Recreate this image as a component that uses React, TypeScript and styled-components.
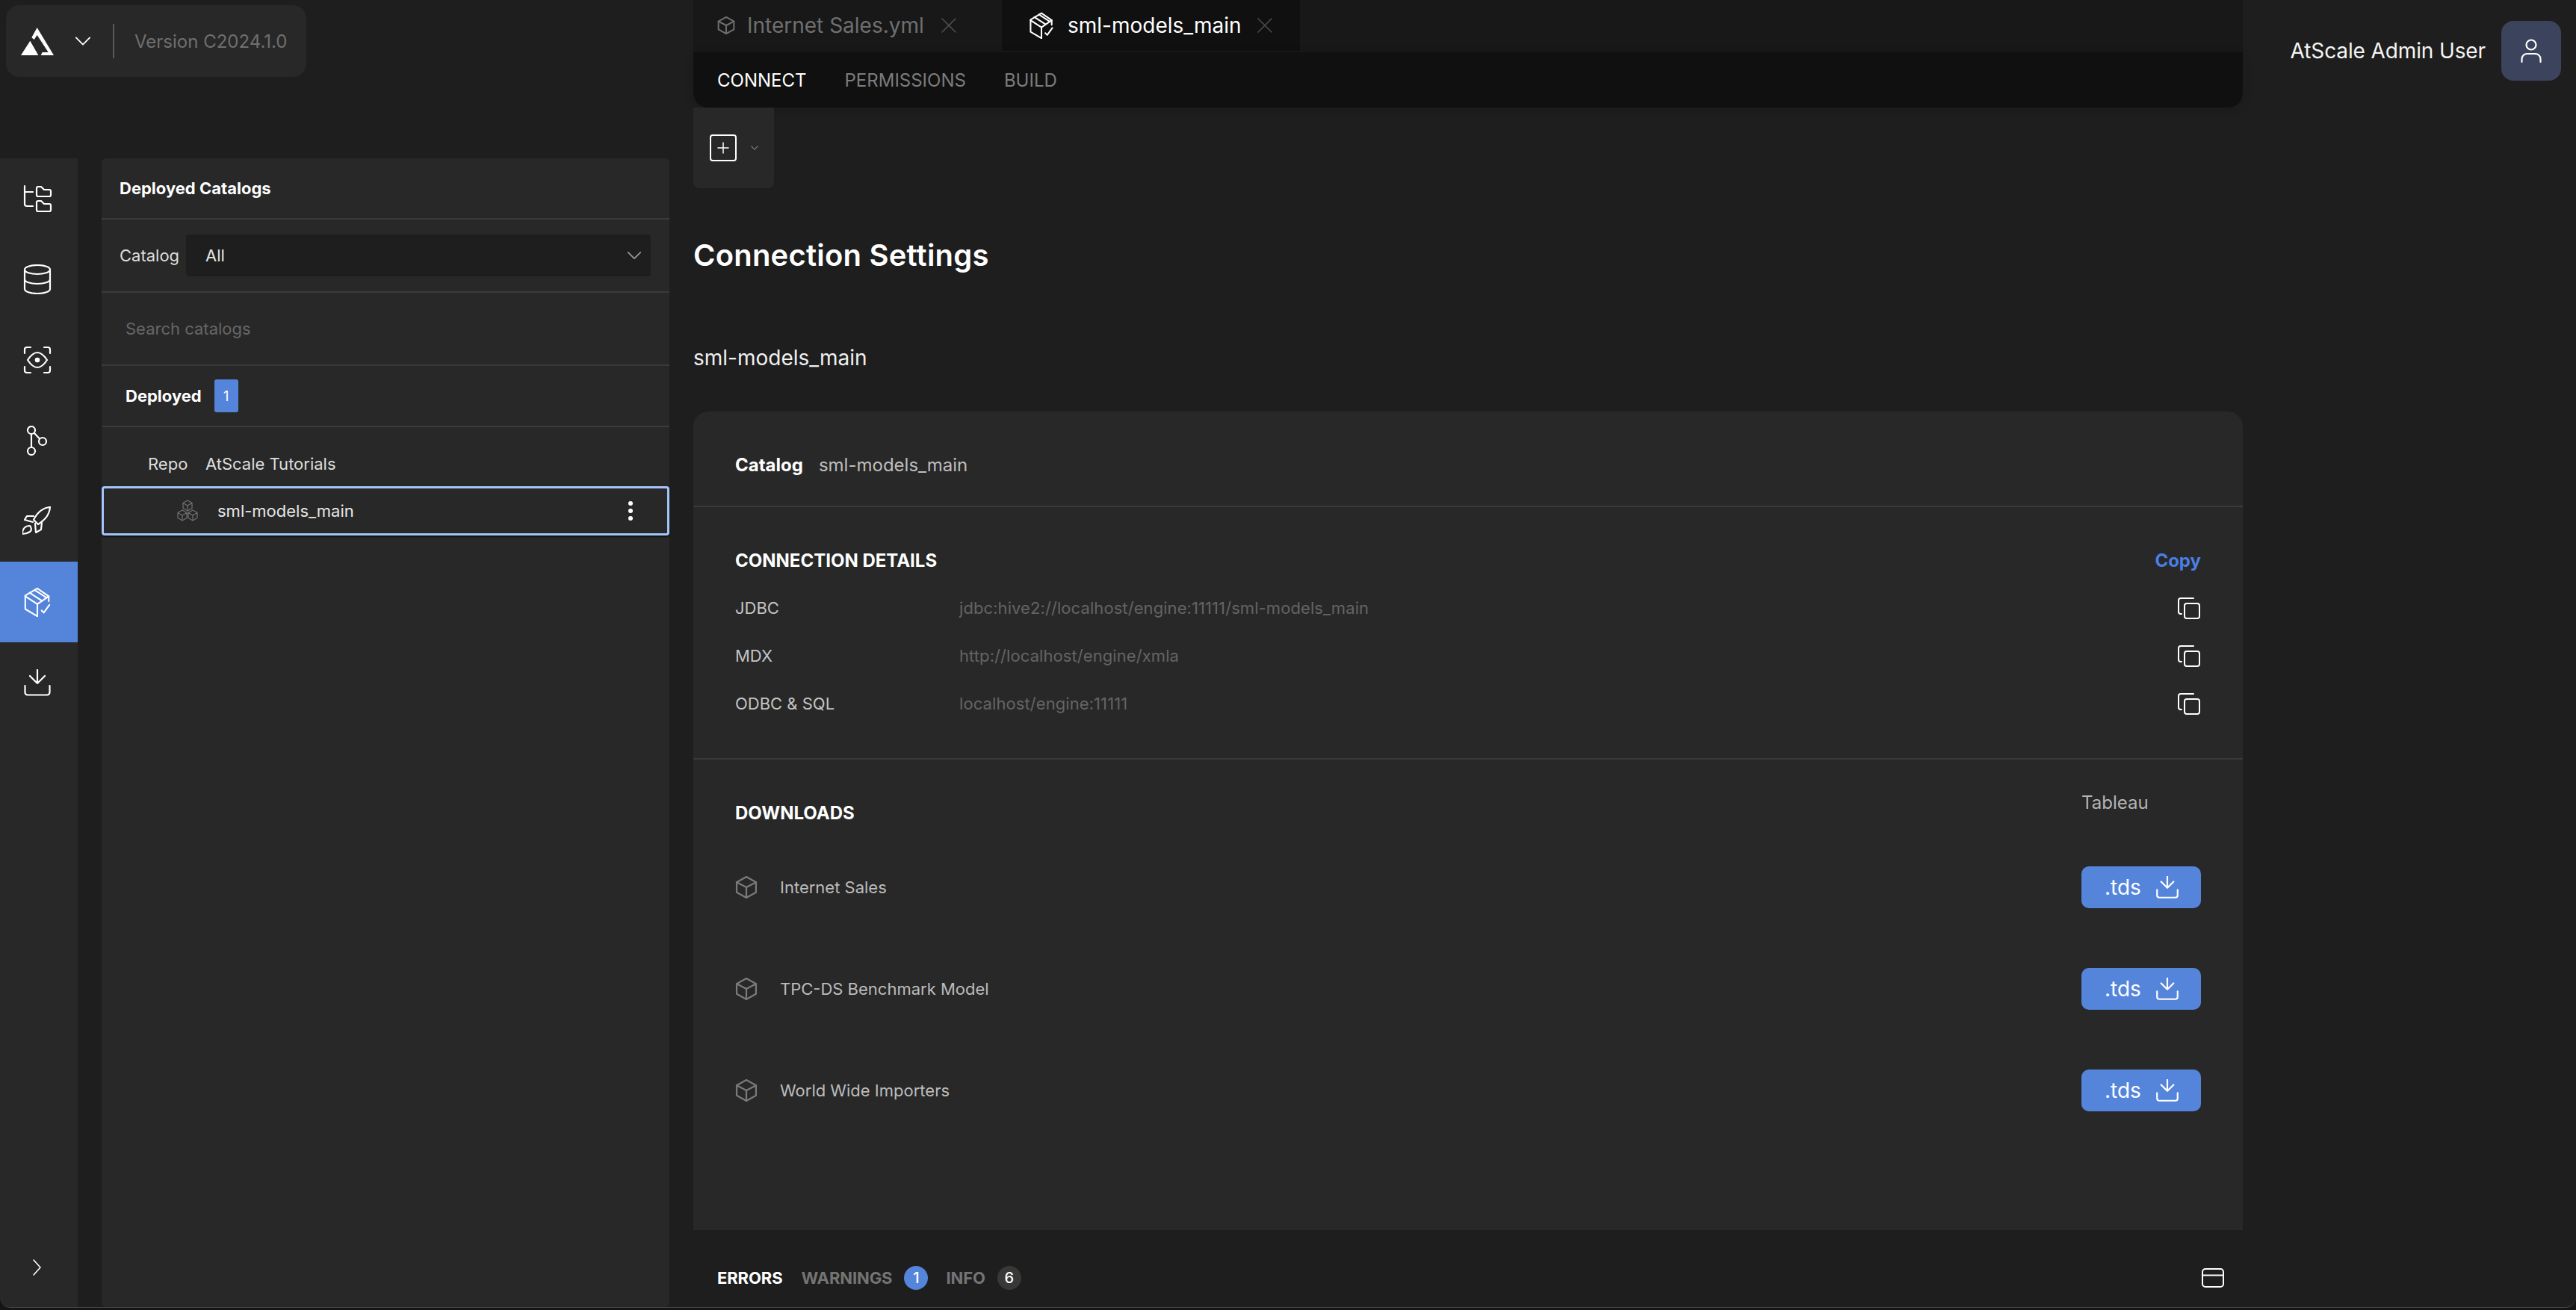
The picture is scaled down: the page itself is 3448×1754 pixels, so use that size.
import React from "react";
import styled, { createGlobalStyle } from "styled-components";

const GlobalStyle = createGlobalStyle`
  html, body {
    margin: 0;
    padding: 0;
    background: #151515;
    overflow: hidden;
  }
  * {
    box-sizing: border-box;
  }
  body {
    font-family: Inter, "Liberation Sans", sans-serif;
  }
`;

// icons, all stroked with currentColor
const Svg = styled.svg<{ $w: number; $h?: number }>`
  width: ${(p) => p.$w}px;
  height: ${(p) => p.$h ?? p.$w}px;
  flex: none;
  display: block;
  fill: none;
  stroke: currentColor;
  stroke-linecap: round;
  stroke-linejoin: round;
`;

const Chevron = ({ size, sw = 2 }: { size: number; sw?: number }) => (
  <Svg $w={size} viewBox="0 0 24 24" strokeWidth={sw}>
    <path d="M2 7l10 10L22 7" />
  </Svg>
);

const Close = () => (
  <Svg $w={22} $h={20} viewBox="0 0 22 20" strokeWidth={1.6}>
    <path d="M2 1l18 18M20 1L2 19" />
  </Svg>
);

const Cube = ({ size, sw = 2.2 }: { size: number; sw?: number }) => (
  <Svg $w={size} viewBox="1.500 0.500 27 29" strokeWidth={sw}>
    <path d="M15 1.5l12.5 7v13L15 28.5l-12.500-7v-13z" />
    <path d="M2.500 8.500L15 15l12.500-6.500M15 15v13.500" />
  </Svg>
);

const PackageCheck = ({ size, sw = 2.2 }: { size: number; sw?: number }) => (
  <Svg $w={size} viewBox="0 0 40 42" strokeWidth={sw}>
    <path d="M20 2l16 11v7M20 2L3 12v19l17 10" />
    <path d="M3 13l17 11 16-11M20 24v17" />
    <path d="M9 8l17 11M16 4l17 11" />
    <path d="M26 33l3 3 8-11" />
  </Svg>
);

const Tray = ({ size, sw = 2.2 }: { size: number; sw?: number }) => (
  <Svg $w={size} viewBox="0 0 36 36" strokeWidth={sw}>
    <path d="M18 1v18M8 9l10 10L28 9" />
    <path d="M1.500 22v9a3.500 3.500 0 0 0 3.500 3.500h26a3.500 3.500 0 0 0 3.500-3.500v-9" />
  </Svg>
);

const CopyIcon = () => (
  <Svg $w={30} viewBox="0 0 30 30" strokeWidth={2}>
    <rect x="9" y="9" width="20" height="20" rx="3" />
    <path d="M21 2H4a3 3 0 0 0-3 3v15a3 3 0 0 0 3 3h1" />
  </Svg>
);

const Logo = () => (
  <svg width="44" height="37" viewBox="25 22 132 111" fill="#fff">
    <polygon points="25,133 62,75 95,133" />
    <polygon points="90,22 157,133 105,133 111,121 135,121 90,52 78,70 68,62" />
  </svg>
);

const Tree = () => (
  <Svg $w={40} viewBox="0 0 40 40" strokeWidth={2.2}>
    <path d="M3 3v24a3 3 0 0 0 3 3h8M3 11h11" />
    <path d="M19 6a2 2 0 0 1 2-2h4l4 4h7a2 2 0 0 1 2 2v5a2 2 0 0 1-2 2H21a2 2 0 0 1-2-2z" />
    <path d="M19 25a2 2 0 0 1 2-2h4l4 4h7a2 2 0 0 1 2 2v6a2 2 0 0 1-2 2H21a2 2 0 0 1-2-2z" />
  </Svg>
);

const Database = () => (
  <Svg $w={40} viewBox="0 0 40 40" strokeWidth={2.2}>
    <ellipse cx="20" cy="7" rx="17" ry="6" />
    <path d="M3 7v26c0 3.300 7.600 6 17 6s17-2.700 17-6V7" />
    <path d="M3 20c0 3.300 7.600 6 17 6s17-2.700 17-6" />
  </Svg>
);

const Eye = () => (
  <Svg $w={40} viewBox="0 0 40 40" strokeWidth={2.2}>
    <path d="M3 11V6a3 3 0 0 1 3-3h5M29 3h5a3 3 0 0 1 3 3v5M37 29v5a3 3 0 0 1-3 3h-5M11 37H6a3 3 0 0 1-3-3v-5" />
    <path d="M7 20Q20 0 33 20Q20 40 7 20z" />
    <circle cx="20" cy="20" r="2.200" fill="currentColor" />
  </Svg>
);

const Branch = () => (
  <Svg $w={40} viewBox="0 0 40 40" strokeWidth={2.2}>
    <circle cx="12" cy="6" r="5" />
    <circle cx="27" cy="21" r="5" />
    <circle cx="12" cy="34" r="5" />
    <path d="M12 11v18M16 10l7 7.500" />
  </Svg>
);

const Rocket = () => (
  <Svg $w={40} viewBox="0 0 40 40" strokeWidth={2.2}>
    <path d="M37 1C28 2 20 8 15 18l6 6C30 18 36 12 37 1z" />
    <path d="M15 13l-9 0-3 5 11 3M17 23l1 12 7-4 1-10" />
    <path d="M0 37c0-7 4-11 10-11 2 2 3 6 0 8-3 2-6 3-10 3z" />
  </Svg>
);

const Cluster = () => (
  <Svg $w={30} viewBox="0 0 30 30" strokeWidth={1.300}>
    <path d="M15 1l6 3.500v7L15 15l-6-3.500v-7zM9 4.500l6 3.500 6-3.500M15 8v7" />
    <path d="M8 14l6 3.500v7L8 28l-6-3.500v-7zM2 17.500L8 21l6-3.500M8 21v7" />
    <path d="M22 14l6 3.500v7L22 28l-6-3.500v-7zM16 17.500l6 3.500 6-3.500M22 21v7" />
  </Svg>
);

const Plus = () => (
  <Svg $w={36} viewBox="0 0 36 36" strokeWidth={2}>
    <rect x="1" y="1" width="34" height="34" rx="3" />
    <path d="M18 11v14M11 18h14" strokeWidth={1.500} />
  </Svg>
);

const UserIcon = () => (
  <Svg $w={40} viewBox="0 0 40 40" strokeWidth={2.200}>
    <circle cx="20" cy="12" r="6.500" />
    <path d="M7.500 35v-4a7 7 0 0 1 7-7h11a7 7 0 0 1 7 7v4" />
  </Svg>
);

const PanelIcon = () => (
  <Svg $w={30} $h={26} viewBox="0 0 30 26" strokeWidth={2}>
    <rect x="1" y="1" width="28" height="24" rx="4" />
    <path d="M1 9.500h28" />
  </Svg>
);

const Window = styled.div`
  display: flex;
  width: 3448px;
  height: 1751px;
  background: #1e1e1e;
  color: #fff;
  overflow: hidden;
  border-radius: 0 0 14px 14px;
  border-bottom: 1px solid #4a4a4a;
`;

const LeftColumn = styled.div`
  width: 896px;
  flex: none;
  display: flex;
  flex-direction: column;
`;

const TopLeft = styled.div`
  height: 212px;
  flex: none;
  padding: 7px 0 0 8px;
`;

const VersionPill = styled.div`
  width: 402px;
  height: 96px;
  display: flex;
  align-items: center;
  padding-left: 20px;
  background: #282828;
  border-radius: 18px;
`;

const PillChevron = styled.span`
  margin-left: 28px;
  display: flex;
  color: #fff;
`;

const PillDivider = styled.span`
  width: 2px;
  height: 46px;
  margin-left: 29px;
  background: #5a5a5a;
`;

const VersionText = styled.span`
  margin-left: 27px;
  font-size: 24px;
  color: #6f6f6f;
  white-space: nowrap;
`;

const LeftBody = styled.div`
  flex: 1;
  display: flex;
  gap: 32px;
  min-height: 0;
`;

const NavRail = styled.nav`
  width: 104px;
  flex: none;
  display: flex;
  flex-direction: column;
  background: #282828;
  color: #fff;
`;

const NavItem = styled.div<{ $active?: boolean }>`
  height: 108px;
  display: flex;
  align-items: center;
  justify-content: center;
  padding-right: 4px;
  background: ${(p) => (p.$active ? "#5585db" : "transparent")};
`;

const NavFoot = styled.div`
  margin-top: auto;
  height: 65px;
  display: flex;
  align-items: flex-start;
  justify-content: center;
  padding: 0 6px 0 0;
`;

const CatalogPanel = styled.aside`
  width: 760px;
  flex: none;
  display: flex;
  flex-direction: column;
  background: #282828;
  border-radius: 6px;
  font-size: 22px;
`;

const PanelRow = styled.div<{ $h: number }>`
  height: ${(p) => p.$h}px;
  flex: none;
  display: flex;
  align-items: center;
  border-bottom: 2px solid #3a3a3a;
`;

const PanelTitle = styled.h2`
  margin: 0 0 0 24px;
  font-size: 22px;
  font-weight: 700;
`;

const CatalogLabel = styled.span`
  margin-left: 24px;
  width: 89px;
  flex: none;
  color: #ddd;
`;

const CatalogSelect = styled.div`
  width: 622px;
  height: 56px;
  display: flex;
  align-items: center;
  justify-content: space-between;
  padding: 0 12px 0 26px;
  background: #1e1e1e;
  border-radius: 4px;
  color: #e4e4e4;
`;

const SelectArrow = styled.span`
  display: flex;
  color: #9a9a9a;
`;

const SearchText = styled.span`
  margin-left: 32px;
  color: #666;
`;

const DeployedLabel = styled.span`
  margin-left: 32px;
  font-weight: 700;
`;

const CountTag = styled.span`
  margin-left: 17px;
  width: 32px;
  height: 44px;
  display: flex;
  align-items: center;
  justify-content: center;
  background: #5585db;
  border-radius: 3px;
  font-size: 18px;
`;

const RepoRow = styled.div`
  height: 79px;
  flex: none;
  display: flex;
  align-items: center;
  padding: 18px 0 0 62px;
  color: #ddd;
`;

const RepoLabel = styled.span`
  width: 77px;
`;

const SelectedRow = styled.div`
  height: 66px;
  flex: none;
  display: flex;
  align-items: center;
  padding: 0 46px 0 97px;
  background: #282828;
  border: 3px solid #a3c5fb;
  border-radius: 4px;
  box-shadow: 0 2px 2px #111;
  color: #e6e6e6;
`;

const ClusterBox = styled.span`
  display: flex;
  color: #6f6f6f;
`;

const SelectedName = styled.span`
  margin-left: 25px;
`;

const Kebab = styled.span`
  margin-left: auto;
  display: flex;
  flex-direction: column;
  gap: 4px;

  i {
    width: 6px;
    height: 6px;
    border-radius: 50%;
    background: #fff;
  }
`;

const Main = styled.main`
  width: 2074px;
  margin-left: 32px;
  flex: none;
  display: flex;
  flex-direction: column;
`;

const TabBar = styled.div`
  height: 70px;
  flex: none;
  display: flex;
  background: #181818;
`;

const Tab = styled.div<{ $active?: boolean }>`
  width: ${(p) => (p.$active ? 399 : 413)}px;
  height: 68px;
  display: flex;
  align-items: center;
  padding-left: ${(p) => (p.$active ? 35 : 32)}px;
  gap: ${(p) => (p.$active ? 17 : 16)}px;
  background: ${(p) => (p.$active ? "#101010" : "transparent")};
  color: ${(p) => (p.$active ? "#fff" : "#6f6f6f")};
  font-size: 28px;
  white-space: nowrap;
`;

const TabClose = styled.span<{ $active?: boolean }>`
  display: flex;
  margin-left: ${(p) => (p.$active ? 3 : 6)}px;
  color: #4c4c4c;
`;

const SubTabs = styled.div`
  height: 74px;
  flex: none;
  display: flex;
  align-items: center;
  gap: 51px;
  padding-left: 32px;
  background: #101010;
  border-radius: 0 0 20px 20px;
  box-shadow: 0 4px 14px rgba(0, 0, 0, 0.15);
`;

const SubTab = styled.span<{ $active?: boolean }>`
  font-size: 24px;
  color: ${(p) => (p.$active ? "#fff" : "#7c7c7c")};
`;

const AddBox = styled.div`
  width: 108px;
  height: 108px;
  flex: none;
  display: flex;
  align-items: flex-start;
  padding: 36px 0 0 22px;
  gap: 19px;
  background: #282828;
  border-radius: 0 0 8px 8px;
  color: #fff;
`;

const AddArrow = styled.span`
  margin-top: 13px;
  display: flex;
  color: #7c7c7c;
`;

const PageTitle = styled.h1`
  margin: 66px 0 0;
  font-size: 40px;
  line-height: 48px;
  font-weight: 600;
  letter-spacing: 0.2px;
`;

const CatalogName = styled.div`
  margin-top: 96px;
  font-size: 28px;
  line-height: 34px;
  color: #f0f0f0;
`;

const Card = styled.section`
  margin-top: 55px;
  height: 1096px;
  flex: none;
  background: #282828;
  border-radius: 20px 20px 0 0;
`;

const CardHead = styled.div`
  height: 128px;
  display: flex;
  align-items: center;
  gap: 21px;
  padding: 16px 56px 0;
  border-bottom: 2px solid #3a3a3a;
  font-size: 24px;
`;

const CardHeadLabel = styled.strong`
  font-weight: 700;
`;

const CardHeadValue = styled.span`
  color: #bdbdbd;
`;

const Details = styled.div`
  height: 338px;
  padding: 51px 56px 0;
  border-bottom: 2px solid #3a3a3a;
`;

const SectionHead = styled.div`
  height: 40px;
  margin-bottom: 12px;
  display: flex;
  align-items: center;
  justify-content: space-between;
`;

const SectionTitle = styled.h3`
  margin: 0;
  font-size: 24px;
  font-weight: 700;
`;

const CopyLink = styled.span`
  font-size: 24px;
  font-weight: 700;
  color: #4a7fe6;
`;

const DetailRow = styled.div`
  height: 64px;
  display: flex;
  align-items: center;
  padding-right: 1px;
  font-size: 22px;
  color: #fff;
`;

const DetailLabel = styled.span`
  width: 300px;
  flex: none;
  color: #c4c4c4;
`;

const DetailValue = styled.span`
  flex: 1;
  color: #646464;
  letter-spacing: 0.08px;
`;

const Downloads = styled.div`
  padding: 41px 56px 0;
`;

const DownloadsHead = styled.div`
  height: 48px;
  margin-bottom: 14px;
  display: flex;
  justify-content: space-between;
  align-items: flex-start;
`;

const DownloadsTitle = styled(SectionTitle)`
  margin-top: 14px;
  line-height: 34px;
`;

const ToolName = styled.span`
  width: 160px;
  font-size: 24px;
  line-height: 34px;
  color: #b4b4b4;
`;

const DownloadRow = styled.div`
  height: 136px;
  display: flex;
  align-items: center;
`;

const RowCube = styled.span`
  display: flex;
  color: #7a7a7a;
`;

const DownloadName = styled.span`
  margin-left: 30px;
  font-size: 22px;
  color: #bcbcbc;
`;

const TdsButton = styled.button`
  margin-left: auto;
  width: 160px;
  height: 56px;
  display: flex;
  align-items: center;
  gap: 20px;
  padding: 0 0 0 31px;
  border: none;
  border-radius: 10px;
  background: #5585db;
  color: #fff;
  font-family: inherit;
  font-size: 28px;
`;

const BottomBar = styled.div`
  flex: 1;
  display: flex;
  align-items: center;
  padding: 24px 25px 0 32px;
  font-size: 22px;
  font-weight: 700;
  letter-spacing: -0.1px;
`;

const BottomTab = styled.span<{ $active?: boolean }>`
  margin-right: ${(p) => (p.$active ? 25 : 16)}px;
  color: ${(p) => (p.$active ? "#fff" : "#747474")};
`;

const Count = styled.span<{ $blue?: boolean }>`
  width: 32px;
  height: 32px;
  margin-right: 24px;
  display: flex;
  align-items: center;
  justify-content: center;
  border-radius: 50%;
  background: ${(p) => (p.$blue ? "#5585db" : "#383838")};
  font-size: 20px;
  font-weight: 500;
`;

const BottomIcon = styled.span`
  margin-left: auto;
  display: flex;
`;

const UserArea = styled.div`
  flex: 1;
  height: 108px;
  margin-top: 28px;
  display: flex;
  justify-content: flex-end;
  gap: 21px;
  padding-right: 20px;
`;

const UserName = styled.span`
  height: 80px;
  line-height: 80px;
  font-size: 28px;
  letter-spacing: -0.12px;
  color: #f4f4f4;
`;

const Avatar = styled.div`
  width: 80px;
  height: 80px;
  display: flex;
  align-items: center;
  justify-content: center;
  background: #3c435c;
  border-radius: 16px;
  color: #fff;
`;

const navIcons = [Tree, Database, Eye, Branch, Rocket, PackageCheck, Tray];

const connections = [
  { label: "JDBC", value: "jdbc:hive2://localhost/engine:11111/sml-models_main" },
  { label: "MDX", value: "http://localhost/engine/xmla" },
  { label: "ODBC & SQL", value: "localhost/engine:11111" },
];

const models = ["Internet Sales", "TPC-DS Benchmark Model", "World Wide Importers"];

export default function App() {
  return (
    <Window>
      <GlobalStyle />
      <LeftColumn>
        <TopLeft>
          <VersionPill>
            <Logo />
            <PillChevron>
              <Chevron size={22} />
            </PillChevron>
            <PillDivider />
            <VersionText>Version C2024.1.0</VersionText>
          </VersionPill>
        </TopLeft>
        <LeftBody>
          <NavRail>
            {navIcons.map((Icon, i) => (
              <NavItem key={i} $active={i === 5}>
                <Icon size={i === 6 ? 36 : 40} />
              </NavItem>
            ))}
            <NavFoot>
              <Svg $w={16} $h={24} viewBox="0 0 16 24" strokeWidth={1.600}>
                <path d="M4 2l9 10-9 10" />
              </Svg>
            </NavFoot>
          </NavRail>
          <CatalogPanel>
            <PanelRow $h={82}>
              <PanelTitle>Deployed Catalogs</PanelTitle>
            </PanelRow>
            <PanelRow $h={98}>
              <CatalogLabel>Catalog</CatalogLabel>
              <CatalogSelect>
                All
                <SelectArrow>
                  <Chevron size={20} />
                </SelectArrow>
              </CatalogSelect>
            </PanelRow>
            <PanelRow $h={98}>
              <SearchText>Search catalogs</SearchText>
            </PanelRow>
            <PanelRow $h={82}>
              <DeployedLabel>Deployed</DeployedLabel>
              <CountTag>1</CountTag>
            </PanelRow>
            <RepoRow>
              <RepoLabel>Repo</RepoLabel>
              AtScale Tutorials
            </RepoRow>
            <SelectedRow>
              <ClusterBox>
                <Cluster />
              </ClusterBox>
              <SelectedName>sml-models_main</SelectedName>
              <Kebab>
                <i />
                <i />
                <i />
              </Kebab>
            </SelectedRow>
          </CatalogPanel>
        </LeftBody>
      </LeftColumn>

      <Main>
        <TabBar>
          <Tab>
            <Cube size={24} sw={2.4} />
            Internet Sales.yml
            <TabClose>
              <Close />
            </TabClose>
          </Tab>
          <Tab $active>
            <PackageCheck size={36} sw={2.4} />
            sml-models_main
            <TabClose $active>
              <Close />
            </TabClose>
          </Tab>
        </TabBar>
        <SubTabs>
          <SubTab $active>CONNECT</SubTab>
          <SubTab>PERMISSIONS</SubTab>
          <SubTab>BUILD</SubTab>
        </SubTabs>
        <AddBox>
          <Plus />
          <AddArrow>
            <Chevron size={10} sw={3} />
          </AddArrow>
        </AddBox>
        <PageTitle>Connection Settings</PageTitle>
        <CatalogName>sml-models_main</CatalogName>
        <Card>
          <CardHead>
            <CardHeadLabel>Catalog</CardHeadLabel>
            <CardHeadValue>sml-models_main</CardHeadValue>
          </CardHead>
          <Details>
            <SectionHead>
              <SectionTitle>CONNECTION DETAILS</SectionTitle>
              <CopyLink>Copy</CopyLink>
            </SectionHead>
            {connections.map((c) => (
              <DetailRow key={c.label}>
                <DetailLabel>{c.label}</DetailLabel>
                <DetailValue>{c.value}</DetailValue>
                <CopyIcon />
              </DetailRow>
            ))}
          </Details>
          <Downloads>
            <DownloadsHead>
              <DownloadsTitle>DOWNLOADS</DownloadsTitle>
              <ToolName>Tableau</ToolName>
            </DownloadsHead>
            {models.map((m) => (
              <DownloadRow key={m}>
                <RowCube>
                  <Cube size={30} />
                </RowCube>
                <DownloadName>{m}</DownloadName>
                <TdsButton>
                  .tds
                  <Tray size={30} sw={2.6} />
                </TdsButton>
              </DownloadRow>
            ))}
          </Downloads>
        </Card>
        <BottomBar>
          <BottomTab $active>ERRORS</BottomTab>
          <BottomTab>WARNINGS</BottomTab>
          <Count $blue>1</Count>
          <BottomTab>INFO</BottomTab>
          <Count>6</Count>
          <BottomIcon>
            <PanelIcon />
          </BottomIcon>
        </BottomBar>
      </Main>

      <UserArea>
        <UserName>AtScale Admin User</UserName>
        <Avatar>
          <UserIcon />
        </Avatar>
      </UserArea>
    </Window>
  );
}
